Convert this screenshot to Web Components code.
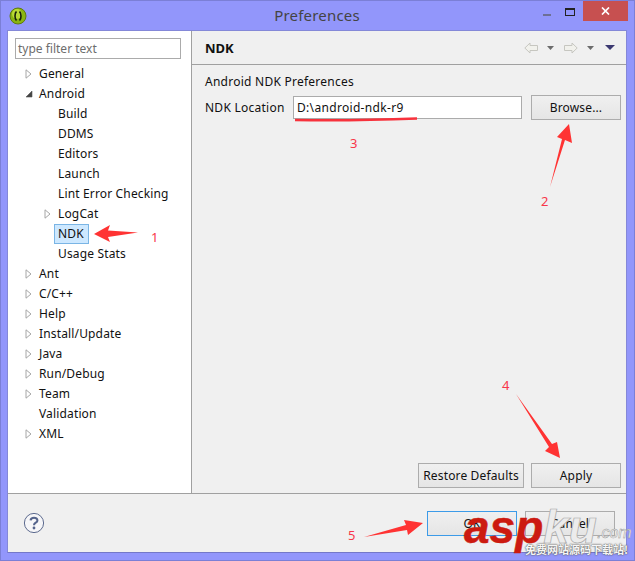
<!DOCTYPE html>
<html>
<head>
<meta charset="utf-8">
<title>Preferences</title>
<style>
  html, body { margin: 0; padding: 0; }
  body { font: 12px "Noto Sans", sans-serif; color: #111; }
</style>
</head>
<body>
<pref-window>
  <title-bar slot="title">Preferences</title-bar>
  <pref-tree slot="tree">
    <tree-item arrow="closed">General</tree-item>
    <tree-item arrow="open">Android</tree-item>
    <tree-item level="1">Build</tree-item>
    <tree-item level="1">DDMS</tree-item>
    <tree-item level="1">Editors</tree-item>
    <tree-item level="1">Launch</tree-item>
    <tree-item level="1">Lint Error Checking</tree-item>
    <tree-item level="1" arrow="closed">LogCat</tree-item>
    <tree-item level="1" selected>NDK</tree-item>
    <tree-item level="1">Usage Stats</tree-item>
    <tree-item arrow="closed">Ant</tree-item>
    <tree-item arrow="closed">C/C++</tree-item>
    <tree-item arrow="closed">Help</tree-item>
    <tree-item arrow="closed">Install/Update</tree-item>
    <tree-item arrow="closed">Java</tree-item>
    <tree-item arrow="closed">Run/Debug</tree-item>
    <tree-item arrow="closed">Team</tree-item>
    <tree-item>Validation</tree-item>
    <tree-item arrow="closed">XML</tree-item>
  </pref-tree>
  <ndk-page slot="page"></ndk-page>
  <dialog-footer slot="footer"></dialog-footer>
</pref-window>
<note-layer></note-layer>

<script>
class PrefWindow extends HTMLElement {
  constructor() {
    super();
    this.attachShadow({ mode: "open" });
    this.shadowRoot.innerHTML = `
      <style>
        :host { display: flex; flex-direction: column; box-sizing: border-box; width: 635px; height: 561px;
          background: #9296fb; border: 1px solid #7b7fd6; padding: 0 7px 7px 6px; }
        .client { display: flex; flex-direction: column; flex: 1; background: #f0f0f0; border-top: 1px solid #8488d8;
          border-left: 1px solid #8488d8; border-right: 1px solid #8488d8; border-bottom: 1px solid #7478c8; min-height: 0; }
        .main { display: flex; height: 462px; border-bottom: 1px solid #a0a0a0; }
      </style>
      <slot name="title"></slot>
      <div class="client">
        <div class="main"><slot name="tree"></slot><slot name="page"></slot></div>
        <slot name="footer"></slot>
      </div>`;
  }
}

class TitleBar extends HTMLElement {
  constructor() {
    super();
    this.attachShadow({ mode: "open" });
    this.shadowRoot.innerHTML = `
      <style>
        :host { display: block; position: relative; height: 29px; flex: none; }
        .bar { display: flex; align-items: center; height: 29px; margin: 0 0 0 2px; }
        svg { display: block; flex: none; }
        .name { flex: 1; text-align: center; font-size: 15px; color: #444; padding-left: 64px; margin-top: -1px; letter-spacing: .2px; }
        .ctl { display: flex; align-items: flex-start; align-self: flex-start; margin-right: -1px; }
        .min { width: 8px; height: 2px; background: #6d6f95; margin: 13px 14px 0 0; }
        .max { box-sizing: border-box; width: 10px; height: 8px; border: 1px solid #222; border-top-width: 2px; margin: 7px 8px 0 0; }
        .close { width: 45px; height: 20px; background: #c75050; display: flex; align-items: center; justify-content: center; }
      </style>
      <div class="bar">
        <svg width="18" height="18" viewBox="0 0 18 18">
          <circle cx="9" cy="9" r="8" fill="#8ab512" stroke="#5f7a10" stroke-width="1"/>
          <circle cx="8" cy="7" r="5" fill="#bada35"/>
          <path d="M7.5 4.5C5.5 6 5.5 12 7.5 13.5M10.5 4.5C12.5 6 12.5 12 10.5 13.5" fill="none" stroke="#17210a" stroke-width="1.6"/>
        </svg>
        <div class="name"><slot></slot></div>
        <div class="ctl">
          <div class="min"></div>
          <div class="max"></div>
          <div class="close">
            <svg width="9" height="8" viewBox="0 0 9 8"><path d="M1 .5L8 7.5M8 .5L1 7.5" stroke="#fff" stroke-width="1.7"/></svg>
          </div>
        </div>
      </div>`;
  }
}

class PrefTree extends HTMLElement {
  constructor() {
    super();
    this.attachShadow({ mode: "open" });
    this.shadowRoot.innerHTML = `
      <style>
        :host { display: flex; flex-direction: column; box-sizing: border-box; width: 184px; flex: none; height: 100%;
          background: #fff; border-right: 1px solid #a0a0a0; padding: 7px 0 0 7px; }
        .filter { box-sizing: border-box; width: 166px; height: 21px; border: 1px solid #ababab; color: #6d6d6d;
          padding: 0 2px; line-height: 19px; margin-bottom: 5px; }
      </style>
      <div class="filter">type filter text</div>
      <slot></slot>`;
  }
}

class TreeItem extends HTMLElement {
  constructor() {
    super();
    this.attachShadow({ mode: "open" });
  }
  connectedCallback() {
    const level = +(this.getAttribute("level") || 0);
    const arrow = this.getAttribute("arrow");
    let icon = "";
    if (arrow === "closed") icon = `<svg width="7" height="10" viewBox="0 0 7 10"><path d="M1 .8L6 5L1 9.2Z" fill="#fff" stroke="#a6a6a6"/></svg>`;
    if (arrow === "open") icon = `<svg width="8" height="8" viewBox="0 0 8 8"><path d="M7 1V7H1Z" fill="#444" stroke="#555" stroke-width=".6"/></svg>`;
    this.shadowRoot.innerHTML = `
      <style>
        :host { display: flex; align-items: center; height: 20px; padding-left: ${level * 19}px; }
        .arrow { width: 17px; margin-left: 10px; margin-right: -5px; display: flex; }
        .text { padding: 0 2px; height: 18px; line-height: 17px; box-sizing: border-box; letter-spacing: .15px; }
        :host([selected]) .text { height: 20px; background: #cde8ff; border: 1px solid #7ab5e5; line-height: 17px; padding: 0 4px 0 3px; margin-left: -2px; }
      </style>
      <span class="arrow">${icon}</span>
      <span class="text"><slot></slot></span>`;
  }
}

class PrefButton extends HTMLElement {
  constructor() {
    super();
    this.attachShadow({ mode: "open" });
    this.shadowRoot.innerHTML = `
      <style>
        :host { display: flex; align-items: center; justify-content: center; box-sizing: border-box; height: 25px; width: 90px; flex: none;
          border: 1px solid #acacac; background: linear-gradient(#f0f0f0, #e5e5e5); letter-spacing: .15px; }
        :host([wide]) { width: 106px; }
        :host([focused]) { border-color: #3c9be8; }
      </style>
      <slot></slot>`;
  }
}

class NdkPage extends HTMLElement {
  constructor() {
    super();
    this.attachShadow({ mode: "open" });
    this.shadowRoot.innerHTML = `
      <style>
        :host { display: flex; flex-direction: column; flex: 1; min-width: 0; height: 100%; letter-spacing: .25px; }
        .head { display: flex; align-items: center; height: 33px; flex: none; padding: 0 11px 0 13px; border-bottom: 1px solid #a0a0a0; }
        .head b { flex: 1; font-size: 13px; font-weight: 700; color: #111; letter-spacing: 0; }
        .head svg { display: block; flex: none; }
        .nav { display: flex; align-items: center; }
        .body { display: flex; flex-direction: column; flex: 1; padding: 8px 5px 5px 13px; }
        .row { display: flex; align-items: center; margin-top: 5px; height: 25px; }
        .row span { width: 88px; white-space: nowrap; }
        .input { box-sizing: border-box; width: 229px; height: 23px; margin-right: 9px; background: #fff; border: 1px solid #ababab; padding: 0 3px; line-height: 21px; letter-spacing: .32px; }
        .spacer { flex: 1; }
        .actions { display: flex; justify-content: flex-end; gap: 7px; }
      </style>
      <div class="head">
        <b>NDK</b>
        <div class="nav">
          <svg width="14" height="12" viewBox="0 0 14 12" style="margin-right:9px"><path d="M.8 6L6 1V3.5H13.5V8.5H6V11Z" fill="#f1f1ec" stroke="#c6c6c0"/></svg>
          <svg width="7" height="4" viewBox="0 0 7 4" style="margin-right:10px"><path d="M0 0H7L3.5 4Z" fill="#6c6c6c"/></svg>
          <svg width="14" height="12" viewBox="0 0 14 12" style="margin-right:9px"><path d="M13.2 6L8 1V3.5H.5V8.5H8V11Z" fill="#f1f1ec" stroke="#c6c6c0"/></svg>
          <svg width="7" height="4" viewBox="0 0 7 4" style="margin-right:11px"><path d="M0 0H7L3.5 4Z" fill="#6c6c6c"/></svg>
          <svg width="10" height="5" viewBox="0 0 10 5"><path d="M0 0H10L5 5Z" fill="#3b3870"/></svg>
        </div>
      </div>
      <div class="body">
        <div>Android NDK Preferences</div>
        <div class="row">
          <span>NDK Location</span>
          <div class="input">D:\\android-ndk-r9</div>
          <pref-button>Browse...</pref-button>
        </div>
        <div class="spacer"></div>
        <div class="actions">
          <pref-button wide>Restore Defaults</pref-button>
          <pref-button>Apply</pref-button>
        </div>
      </div>`;
  }
}

class DialogFooter extends HTMLElement {
  constructor() {
    super();
    this.attachShadow({ mode: "open" });
    this.shadowRoot.innerHTML = `
      <style>
        :host { display: flex; align-items: center; flex: 1; padding: 0 11px 0 15px; gap: 8px; }
        svg { display: block; margin-top: 0; }
        .spacer { flex: 1; }
      </style>
      <svg width="22" height="22" viewBox="0 0 22 22">
        <circle cx="11" cy="11" r="9.6" fill="#f6f6f8" stroke="#5d6b8f" stroke-width="1"/>
        <path d="M7.6 8.4C7.8 4.8 14.4 4.8 14.4 8.4C14.4 10.8 11 10.6 11 13.2" fill="none" stroke="#55648c" stroke-width="2.1"/>
        <circle cx="11" cy="16" r="1.4" fill="#55648c"/>
      </svg>
      <div class="spacer"></div>
      <pref-button focused>OK</pref-button>
      <pref-button>Cancel</pref-button>`;
  }
}

// red arrows, numbers and the site watermark pasted over the screenshot
class NoteLayer extends HTMLElement {
  constructor() {
    super();
    this.attachShadow({ mode: "open" });
    this.shadowRoot.innerHTML = `
      <style>
        :host { display: block; position: absolute; left: 0; top: 0; width: 635px; height: 561px; overflow: hidden; pointer-events: none; }
        svg { position: absolute; left: 0; top: 0; }
        .n { position: absolute; color: #f8364a; font: 13px "Noto Sans", sans-serif; line-height: 16px; }
        .mark { position: absolute; left: 464px; top: 502px; font: italic 700 46px/50px "Liberation Sans", sans-serif; white-space: nowrap; -webkit-text-stroke: .5px currentColor; }
        .mark i { color: #cc1a10; font-style: inherit; }
        .mark u { text-decoration: none; color: #ececec; -webkit-text-stroke: .7px #a8a8a8; }
        .com { position: absolute; left: 597px; top: 524px; font: italic 16px/18px "Liberation Sans", sans-serif; color: #f4f4f4; -webkit-text-stroke: .4px #8a8a8a; }
        .cn { position: absolute; left: 525px; top: 542px; font: 700 11px/15px "Noto Sans CJK SC", sans-serif; color: #f6f6f6; white-space: nowrap; text-shadow: 0 0 2px #555, 0 0 1px #555; }
      </style>
      <svg width="635" height="561" viewBox="0 0 635 561">
        <path d="M295 120Q350 121 417 118.5" fill="none" stroke="#f7323c" stroke-width="2.4"/>
        <g fill="#ff3333">
          <path d="M94 234L110 225L108 230.5L138 232.5L108 237L110 242Z"/>
          <path d="M569 124L572 143L565 140L550 187L562 139L557 137Z"/>
          <path d="M516 394L552 444L557 442L560 458L545 451L549 447Z"/>
          <path d="M364 537L406 525L404 520L423 523L408 535L407 530Z"/>
        </g>
      </svg>
      <span class="n" style="left:151px;top:229px">1</span>
      <span class="n" style="left:541px;top:193px">2</span>
      <span class="n" style="left:350px;top:135px">3</span>
      <span class="n" style="left:502px;top:377px">4</span>
      <span class="n" style="left:348px;top:527px">5</span>
      <div class="mark"><i>asp</i><u>ku</u></div>
      <div class="com">.com</div>
      <div class="cn">免费网站源码下载站!</div>`;
  }
}

customElements.define("pref-window", PrefWindow);
customElements.define("title-bar", TitleBar);
customElements.define("pref-tree", PrefTree);
customElements.define("tree-item", TreeItem);
customElements.define("pref-button", PrefButton);
customElements.define("ndk-page", NdkPage);
customElements.define("dialog-footer", DialogFooter);
customElements.define("note-layer", NoteLayer);
</script>
</body>
</html>
